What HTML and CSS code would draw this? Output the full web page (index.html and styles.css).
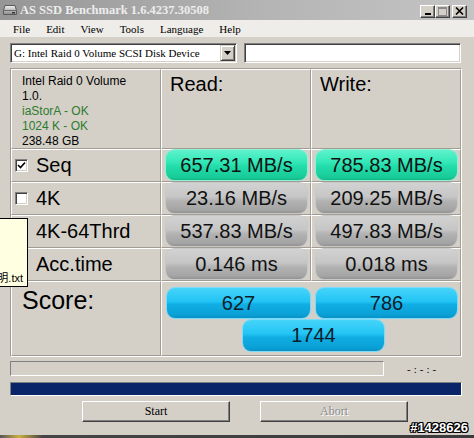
FILE: index.html
```html
<!DOCTYPE html>
<html>
<head>
<meta charset="utf-8">
<link rel="stylesheet" href="styles.css">
</head>
<body>
<div class="win">
  <div class="titlebar">
    <svg class="appicon" width="14" height="12" viewBox="0 0 14 12">
      <defs>
        <linearGradient id="hd" x1="0" y1="0" x2="0" y2="1">
          <stop offset="0" stop-color="#f2f2f2"/>
          <stop offset="1" stop-color="#8a8a8a"/>
        </linearGradient>
      </defs>
      <path d="M2 1.5h10l1.5 5v4h-13v-4z" fill="url(#hd)" stroke="#5a5a5a"/>
      <path d="M0.5 6.5h13" stroke="#6a6a6a"/>
      <rect x="9" y="8" width="3" height="1.5" fill="#3a3a3a"/>
    </svg>
    <span class="title">AS SSD Benchmark 1.6.4237.30508</span>
    <div class="tbtns">
      <span class="tbtn"><svg width="8" height="8" viewBox="0 0 8 8"><rect x="1" y="6" width="6" height="2" fill="#000"/></svg></span>
      <span class="tbtn"><svg width="9" height="9" viewBox="0 0 9 9"><rect x="0.5" y="0.5" width="8" height="8" fill="none" stroke="#8a8a8a"/><rect x="0" y="0" width="9" height="2" fill="#8a8a8a"/></svg></span>
      <span class="tbtn gap"><svg width="9" height="8" viewBox="0 0 9 8"><path d="M1 0.5l7 7M8 0.5l-7 7" stroke="#000" stroke-width="1.6"/></svg></span>
    </div>
  </div>
  <div class="menubar">
    <span class="mi">File</span>
    <span class="mi">Edit</span>
    <span class="mi">View</span>
    <span class="mi">Tools</span>
    <span class="mi">Language</span>
    <span class="mi">Help</span>
  </div>
  <div class="content">
    <div class="toolbar">
      <div class="combo">
        <span class="combo-text">G: Intel Raid 0 Volume SCSI Disk Device</span>
        <span class="dd"><svg width="7" height="4" viewBox="0 0 7 4"><path d="M0 0h7l-3.5 4z" fill="#000"/></svg></span>
      </div>
      <div class="textbox"></div>
    </div>

    <div class="grid">
      <div class="cell info">
        <div>Intel Raid 0 Volume</div>
        <div>1.0.</div>
        <div class="ok">iaStorA - OK</div>
        <div class="ok">1024 K - OK</div>
        <div>238.48 GB</div>
      </div>
      <div class="cell head">Read:</div>
      <div class="cell head">Write:</div>

      <div class="cell label"><span class="check"><svg width="9" height="9" viewBox="0 0 9 9"><path d="M1 4l2.5 2.5L8 1.5" fill="none" stroke="#000" stroke-width="1.6"/></svg></span>Seq</div>
      <div class="cell barcell"><div class="bar green">657.31 MB/s</div></div>
      <div class="cell barcell"><div class="bar green">785.83 MB/s</div></div>

      <div class="cell label"><span class="check"></span>4K</div>
      <div class="cell barcell"><div class="bar gray">23.16 MB/s</div></div>
      <div class="cell barcell"><div class="bar gray">209.25 MB/s</div></div>

      <div class="cell label"><span class="check"></span>4K-64Thrd</div>
      <div class="cell barcell"><div class="bar gray">537.83 MB/s</div></div>
      <div class="cell barcell"><div class="bar gray">497.83 MB/s</div></div>

      <div class="cell label"><span class="check"></span>Acc.time</div>
      <div class="cell barcell"><div class="bar gray">0.146 ms</div></div>
      <div class="cell barcell"><div class="bar gray">0.018 ms</div></div>

      <div class="cell score-label">Score:</div>
      <div class="cell score">
        <div class="score-row">
          <div class="bar blue s1">627</div>
          <div class="bar blue s2">786</div>
        </div>
        <div class="score-row total">
          <div class="bar blue s2">1744</div>
        </div>
      </div>
    </div>

    <div class="progrow">
      <div class="prog1"></div>
      <span class="time">-:-:-</span>
    </div>
    <div class="prog2"></div>
    <div class="buttons">
      <button class="btn">Start</button>
      <button class="btn disabled">Abort</button>
    </div>
  </div>
  <div class="strip"></div>
  <div class="tip"><span>說明.txt</span></div>
  <div class="watermark">#1428626</div>
</div>
</body>
</html>
```
FILE: styles.css
```css
* { box-sizing: border-box; }
html, body { margin: 0; padding: 0; }
body {
  width: 474px;
  height: 438px;
  overflow: hidden;
  background: #d4d0c8;
  font-family: "Liberation Sans", Arial, sans-serif;
}
.win {
  position: relative;
  width: 474px;
  height: 438px;
  display: flex;
  flex-direction: column;
  background: #d4d0c8;
}
.titlebar {
  height: 20px;
  display: flex;
  align-items: center;
  padding-left: 3px;
  background: linear-gradient(to right, #969696, #b4b4b4 55%, #c4c4c4);
}
.appicon { margin-right: 3px; flex: none; }
.title {
  flex: 1;
  font: bold 12.5px "Liberation Serif", serif;
  color: #ededed;
  white-space: nowrap;
}
.tbtns {
  display: flex;
  margin-right: 7px;
  margin-top: 2px;
}
.tbtn {
  width: 15px;
  height: 13px;
  background: #d4d0c8;
  border: 1px solid;
  border-color: #fff #404040 #404040 #fff;
  box-shadow: inset -1px -1px #808080;
  display: flex;
  align-items: center;
  justify-content: center;
}
.tbtn.gap { margin-left: 2px; }
.menubar {
  height: 17px;
  background: #efede9;
  display: flex;
  align-items: center;
  padding-left: 13px;
  font: 11px "Liberation Serif", serif;
  color: #000;
}
.mi { margin-right: 16px; }
.content {
  padding: 6px 12px 0 10px;
}
.toolbar {
  display: flex;
  gap: 7px;
  height: 20px;
}
.combo, .textbox {
  height: 20px;
  background: #fff;
  border: 1px solid;
  border-color: #808080 #fff #fff #808080;
  box-shadow: inset 1px 1px #404040, inset -1px -1px #d4d0c8;
}
.combo {
  width: 227px;
  display: flex;
  align-items: center;
  padding: 1px 1px 1px 3px;
}
.combo-text {
  flex: 1;
  font: 11px "Liberation Serif", serif;
  white-space: nowrap;
}
.dd {
  width: 15px;
  height: 16px;
  background: #d4d0c8;
  border: 1px solid;
  border-color: #d4d0c8 #404040 #404040 #d4d0c8;
  box-shadow: inset 1px 1px #fff, inset -1px -1px #808080;
  display: flex;
  align-items: center;
  justify-content: center;
}
.textbox { width: 217px; }

.grid {
  margin-top: 5px;
  width: 452px;
  display: grid;
  grid-template-columns: 150px 150px 150px;
  grid-template-rows: 80px 33px 33px 33px 33px 75px;
  border-top: 1px solid #a09c94;
  border-left: 1px solid #a09c94;
  border-right: 1px solid #fff;
  border-bottom: 1px solid #fff;
}
.cell {
  border-top: 1px solid #fff;
  border-left: 1px solid #fff;
  border-right: 1px solid #a09c94;
  border-bottom: 1px solid #a09c94;
}
.info {
  padding: 4px 0 0 10px;
  font-size: 12px;
  line-height: 15px;
  color: #000;
}
.info .ok { color: #2e7a2e; }
.head {
  padding: 3px 0 0 8px;
  font-size: 20px;
  color: #000;
}
.label {
  display: flex;
  align-items: center;
  padding-left: 3px;
  font-size: 20px;
  color: #000;
}
.check {
  width: 13px;
  height: 13px;
  margin-right: 8px;
  background: #fff;
  border: 1px solid;
  border-color: #808080 #fff #fff #808080;
  box-shadow: inset 1px 1px #404040, inset -1px -1px #d4d0c8;
  display: flex;
  align-items: center;
  justify-content: center;
  flex: none;
}
.barcell {
  padding: 0 3px 1px 4px;
}
.bar {
  height: 30px;
  border-radius: 8px;
  display: flex;
  align-items: center;
  justify-content: center;
  font-size: 20px;
  color: #111;
}
.bar.green {
  background: linear-gradient(#5ff2cc 0%, #34e8b8 40%, #22dcaa 55%, #18cc98 90%, #12b888 100%);
  box-shadow: 0 0 0 1px #8ef0d4;
}
.bar.gray {
  background: linear-gradient(#d2d2d2 0%, #c6c6c6 45%, #b2b2b2 60%, #a4a4a4 90%, #929292 100%);
  box-shadow: 0 0 0 1px #c8c8c8;
}
.bar.blue {
  background: linear-gradient(#46d4fa 0%, #22c4f4 45%, #10aee4 55%, #0aa0d6 90%, #0890c4 100%);
  box-shadow: 0 0 0 1px #7adcfa;
  color: #0c1c2a;
}
.score-label {
  padding: 4px 0 0 10px;
  font-size: 25px;
  color: #000;
}
.score {
  grid-column: 2 / span 2;
  padding: 6px 3px 0 5px;
}
.score-row {
  display: flex;
  gap: 6px;
}
.score-row.total {
  margin-top: 2px;
  padding-left: 76px;
}
.s1 { width: 143px; }
.s2 { width: 141px; }
.total .bar { height: 31px; }

.progrow {
  margin-top: 4px;
  height: 15px;
  display: flex;
  align-items: center;
}
.prog1 {
  width: 374px;
  height: 15px;
  border: 1px solid;
  border-color: #808080 #fff #fff #808080;
}
.time {
  margin-left: 23px;
  font: 11px "Liberation Serif", serif;
  letter-spacing: 3px;
  color: #000;
}
.prog2 {
  margin-top: 6px;
  width: 452px;
  height: 14px;
  background: #0a246a;
  border: 1px solid;
  border-color: #808080 #fff #fff #808080;
}
.buttons {
  margin-top: 5px;
  display: flex;
  gap: 30px;
  padding-left: 72px;
}
.btn {
  width: 148px;
  height: 21px;
  padding: 0;
  background: #d4d0c8;
  border: 1px solid;
  border-color: #fff #404040 #404040 #fff;
  box-shadow: inset -1px -1px #808080;
  font: 12px "Liberation Serif", serif;
  color: #000;
}
.btn.disabled {
  color: #8a8a8a;
  text-shadow: 1px 1px #fff;
}
.strip {
  margin-top: auto;
  height: 3px;
  background: linear-gradient(to right, #555 0%, #c8b040 4%, #444 9%, #3a3a3a 100%);
}
.tip {
  position: absolute;
  left: -1px;
  top: 218px;
  width: 29px;
  height: 69px;
  background: #ffffe1;
  border: 1px solid #000;
  overflow: hidden;
  display: flex;
  align-items: flex-end;
  justify-content: flex-end;
  padding: 0 4px 1px 0;
  font: 11px "Liberation Sans", "Noto Sans CJK TC", sans-serif;
  color: #000;
  white-space: nowrap;
}
.watermark {
  position: absolute;
  right: 6px;
  top: 420px;
  font: bold 13px "Liberation Sans", Arial, sans-serif;
  color: #fff;
  text-shadow: -1px 0 #000, 1px 0 #000, 0 -1px #000, 0 1px #000, 1px 1px #000, -1px -1px #000, 1px -1px #000, -1px 1px #000;
}
```
